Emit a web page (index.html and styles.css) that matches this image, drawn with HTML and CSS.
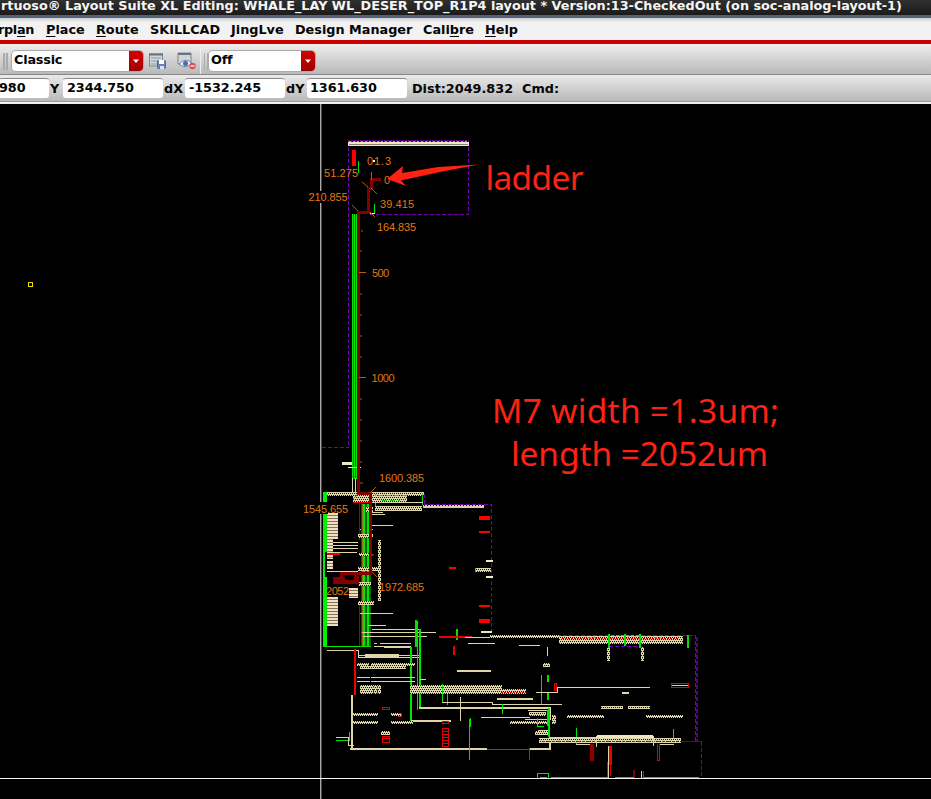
FILE: index.html
```html
<!DOCTYPE html>
<html lang="en">
<head>
<meta charset="utf-8">
<title>Layout Suite XL</title>
<link rel="stylesheet" href="styles.css">
</head>
<body>
<div class="app">
<header class="title"><span class="title-text">rtuoso® Layout Suite XL Editing: WHALE_LAY WL_DESER_TOP_R1P4 layout * Version:13-CheckedOut (on soc-analog-layout-1)</span></header>
<nav class="menu">
<span class="m1">rpl<u>a</u>n</span><span class="m2"><u>P</u>lace</span><span class="m3"><u>R</u>oute</span><span class="m4">SKILLCAD</span><span class="m5">JingLve</span><span class="m6">Design Manager</span><span class="m7">Cali<u>b</u>re</span><span class="m8"><u>H</u>elp</span>
</nav>
<div class="tools">
<i class="grip"></i>
<div class="combo wide"><span>Classic</span><b class="drop"><svg width="8" height="5" viewBox="0 0 8 5"><path d="M1 .5h6L4 4z" fill="#fff"/></svg></b></div>
<svg class="ic save" width="18" height="18" viewBox="0 0 18 18"><rect x=".5" y="2" width="13" height="12" fill="#d5d8da" stroke="#808990"/><path d="M0 2.5h14" stroke="#66717b" stroke-width="2"/><path d="M2 6h10M2 9h7M2 12h6" stroke="#8c969d"/><rect x="8.500" y="8.500" width="8" height="8" rx="1" fill="#6882b4" stroke="#536b9b"/><path d="M10 8h5v4h-5z" fill="#fff"/><path d="M11 14h4v3h-4z" fill="#d9e1ee"/></svg>
<svg class="ic eye" width="19" height="18" viewBox="0 0 19 18"><path d="M1 12V1h13v11z" fill="#d3d6d9" stroke="#7a858e"/><path d="M1 2h13" stroke="#69747e" stroke-width="2"/><path d="M2 12q6-7 13-1-6 7-13 1z" fill="#e9eff8" stroke="#6d85a6"/><circle cx="8.500" cy="11.500" r="2.500" fill="#486caa"/><circle cx="15.500" cy="14" r="3.200" fill="#db4f52"/><path d="M13.500 14h4" stroke="#fff" stroke-width="1.300"/></svg>
<i class="edge"></i><i class="grip second"></i>
<div class="combo off"><span>Off</span><b class="drop"><svg width="8" height="5" viewBox="0 0 8 5"><path d="M1 .5h6L4 4z" fill="#fff"/></svg></b></div>
</div>
<div class="coords">
<span class="field first">980</span><label class="ly">Y</label><span class="field fy">2344.750</span><label class="lx">dX</label><span class="field fx">-1532.245</span><label class="ld">dY</label><span class="field fd">1361.630</span><span class="dist">Dist:2049.832</span><span class="cmd">Cmd:</span>
</div>
<main class="canvas">
<svg width="931" height="695" viewBox="0 104 931 695">
<defs>
<pattern id="hatch" width="4" height="4" patternUnits="userSpaceOnUse"><path d="M0 0h4v4H0z" fill="#dcd5ae"/><path d="M0 1h1v1H0zM2 1h1v1H2zM1 3h1v1H1zM3 3h1v1H3z" fill="#15150f"/></pattern>
<pattern id="fine" width="3" height="3" patternUnits="userSpaceOnUse"><path d="M0 0h3v3H0z" fill="#d8d0a8"/><path d="M1 1h1v1H1z" fill="#000"/></pattern>
<pattern id="rungs" width="4" height="3" patternUnits="userSpaceOnUse"><path d="M0 0h4v2H0z" fill="#f1dfbd"/><path d="M0 2h4v1H0z" fill="#81745e"/></pattern>
</defs>
<g class="crisp">
<path class="axis" d="M320.500 104V799"/><path class="axis soft" d="M321.500 104V799"/><path class="axis bright" d="M0 778.500H931"/>
<rect class="yellow line" x="28.500" y="282.500" width="4" height="4"/>
<g class="purple dash">
<path d="M348.500 141V448M322 447.500H348M348 141.500H468.500V214.500H370M372 492.500H424.500V505M424 504.500H491.500V635.500H695.500V741M609 646.500H642M701.500 742V778"/>
</g>
<path class="purple dim" stroke-dasharray="4 2" d="M696.500 637V742"/>

<rect class="cream" x="348" y="142" width="121" height="4"/><path d="M348 140.500H469" stroke="#7600b3" stroke-dasharray="2 1"/><path d="M349 141.500H468" stroke="#a993b5" stroke-dasharray="2 2"/><path d="M349 144.500H468" stroke="#8c866f"/>
<rect class="red" x="352" y="150" width="4" height="16"/>
<path class="green line" d="M358.500 161V173M374.500 204V213"/>
<path d="M359 213.500H375" stroke="#eee5cb"/>

<rect x="352" y="214" width="6" height="265" fill="#007200"/><path class="green line" d="M352.500 214V479M354.500 214V479M356.500 214V479"/>
<path d="M352.500 478V496M355.500 478V496" stroke="#d9d5a9"/>
<g class="cream"><rect x="342" y="462" width="10" height="3"/><rect x="348" y="467" width="13" height="1"/></g>

<rect class="hatch" x="326" y="492" width="98" height="4"/>
<rect class="green" x="323" y="492" width="4" height="154"/>
<rect x="325" y="552" width="2" height="25" fill="#000"/>
<path class="green line" d="M422.500 493V505M375.500 494V506"/>
<rect class="hatch" x="353" y="496" width="54" height="7"/><path class="red line" d="M353 502.500H371M408 507.500H421"/>
<path class="cream line" d="M407 502.500H423"/>
<rect class="hatch" x="375" y="506" width="47" height="5"/><rect class="fine" x="423" y="505" width="61" height="3"/>
<path stroke="#0ed800" stroke-dasharray="5 3" d="M378 495.500H407M382 500.500H400"/>
<rect class="rungs" x="327" y="513" width="11" height="26"/><rect class="rungs" x="327" y="539" width="6" height="20"/>
<g class="cream line"><path d="M333 542.500H358M333 545.500H358M333 548.500H358M333 552.500H357M372 514.500H385M372 512.500H383M371 525.500H393M359 529.500H373"/></g>
<path class="red line" stroke-width="2" d="M327 554H340"/>
<rect class="rungs" x="327" y="561" width="6" height="8"/><rect class="rungs" x="327" y="597" width="11" height="29"/><rect class="rungs" x="349" y="588" width="9" height="10"/><path class="cream line" d="M327 571.500H358"/>

<rect x="361" y="504" width="10" height="142" fill="#006100"/><path class="green line" stroke-width="2" d="M364 504V646M368 504V646"/><path d="M359.500 502V540M359.500 605V646" stroke="#a50000"/><path d="M362.500 504V646" stroke="#827316"/>
<g class="hatch"><rect x="358" y="534" width="15" height="4"/><rect x="359" y="553" width="11" height="3"/><rect x="358" y="567" width="23" height="4"/><rect x="359" y="582" width="12" height="4"/><rect x="358" y="601" width="16" height="4"/><rect x="366" y="507" width="7" height="5"/><rect x="378" y="540" width="3" height="61"/></g>
<g class="maroon line" stroke-width="3" fill="none"><path d="M381 179.500H371V188H368.500V212H358.500V494M358 493.500H370.500V573H341V582M356 573V582"/></g>
<g class="maroon"><rect x="333" y="577" width="12" height="7"/><rect x="345" y="580" width="14" height="4"/><rect x="354" y="576" width="5" height="8"/></g>

<g class="cream line"><path d="M360 613.500H393M368 625.500H386M362 632.500H436M363 636.500H427M374 643.500H377M380 643.500H411M374 646.500H411M384 647.500H411M325 646.500H371M327 650.500H358V657H420M358 655.500H420M372 629.500H421"/><path stroke-width="3" d="M365 655H399"/><path d="M407 657.500H418"/></g>
<path class="green line" d="M323 646.500H371M417 620.500V710M411.500 647V721M420.500 629V708"/><path class="green line" stroke-width="2" d="M411 647V721M420 629V707M416 620V647"/><path class="green line" stroke-width="2" d="M457 629V640"/>
<path class="red line" stroke-width="2" d="M439 637H472M355 649V695M454 646V655"/>
<g class="red"><rect x="479" y="516" width="11" height="4"/><rect x="479" y="531" width="11" height="2"/><rect x="449" y="567" width="7" height="2"/><rect x="479" y="605" width="11" height="2"/><rect x="479" y="619" width="11" height="4"/></g>
<g class="cream"><rect x="486" y="560" width="7" height="2"/><rect class="hatch" x="476" y="568" width="15" height="4"/><rect x="486" y="576" width="7" height="2"/><rect x="481" y="631" width="11" height="2"/></g><path class="green line" d="M475.500 568V572"/>
<path class="cream line" d="M465 637.500H500M468 643.500H495"/>

<g class="hatch"><rect x="490" y="635" width="70" height="3"/><rect x="559" y="636" width="124" height="8"/><rect x="607" y="647" width="3" height="14"/><rect x="641" y="647" width="3" height="14"/><rect x="543" y="663" width="7" height="4"/><rect x="357" y="663" width="12" height="3"/><rect x="371" y="663" width="44" height="3"/><rect x="360" y="666" width="46" height="3"/><rect x="360" y="685" width="21" height="9"/><rect x="410" y="685" width="92" height="9"/><rect x="501" y="689" width="25" height="5"/></g>
<path class="red line" stroke-dasharray="2 1" d="M562 638.500H679M501 692.500H526M373.500 686V694M377.500 686V694"/>
<g class="green line" stroke-width="2"><path d="M688 635V648M609 634V648M625 634V646M640 634V648M548 675V682M548 693V700"/><path stroke-width="1" d="M541.500 675V704M442.500 684V702M447.500 694V705M576.500 728V744M673.500 729V740"/></g>
<g class="cream line"><path d="M519 645.500H540M547 647V656"/><path stroke-width="2" d="M457 671H491M497 699H533"/><path d="M357 677.500H370M371 677.500H415M357 681.500H370M371 681.500H415M420 679.500H426M442 702.500H492V704H530M497 704.500H562M481 717.500H530M556 687.500H650M536 692.500H557V687M622 693H629M622 692H629M460.500 697V721"/></g>
<path class="cream line" stroke-width="2" fill="none" d="M419 708H550V720M411 720.500H451"/>
<path class="red line" fill="none" d="M554.500 683.500H556.500V690.500H554.500ZM671.500 683.500H688.500V687.500H671.500Z"/><path class="cream line" d="M672 685.500H688"/>
<g class="hatch"><rect x="601" y="706" width="22" height="3"/><rect x="628" y="706" width="22" height="3"/><rect x="567" y="715" width="37" height="3"/><rect x="646" y="715" width="37" height="3"/><rect x="352" y="713" width="26" height="3"/><rect x="391" y="713" width="11" height="3"/><rect x="352" y="721" width="26" height="3"/><rect x="391" y="721" width="22" height="3"/><rect x="381" y="731" width="9" height="4"/><rect x="510" y="721" width="40" height="3"/><rect x="529" y="712" width="17" height="4"/><rect x="535" y="731" width="15" height="4"/><rect x="552" y="715" width="4" height="9"/><rect x="539" y="738" width="142" height="5"/></g><rect class="cream" x="597" y="735" width="56" height="3"/>
<path class="cream line" d="M528 710.500H549M525 719.500H547M538 730.500H550M549 737.500H599M576 744.500H592M660 744.500H674"/>
<path class="cream line" stroke-width="2" d="M352 695V748M350 749H487M550 742V749H530"/><path class="dark-green line" d="M487 749.500H530M529.500 748V760"/>
<path class="green line" d="M336 740.500H350M349.500 732V740M469.500 719V760M470.500 718V727M502.500 704V714"/><path class="green line" stroke-width="2" d="M549 708V737"/><path d="M537.500 718V726H544M547 710V726" class="green line" fill="none"/><path class="cream line" fill="none" d="M336 737.500H348.500V745.500H354"/>
<path class="red line" fill="none" d="M382.500 707.500H389.500V709.500H382.500ZM398 713.500H401.500V716.500H398M382.500 736.500H389.500V742.500H382.500ZM383 738.500H389"/>
<path class="red line" fill="none" d="M442.500 721.500H448.500V723.500H442.500ZM442.500 728.500H448.500V746.500H442.500ZM443 731.500H448M443 734.500H448M443 737.500H448M443 740.500H448M443 743.500H448"/>
<path class="maroon line" d="M680 741.500H702"/><path class="red line" stroke-dasharray="3 2" d="M542 741.500H678"/>
<rect x="590" y="744" width="4" height="17" fill="#920000"/><path class="red line" fill="none" d="M657.500 744V760.500H659.500V744"/>
<path class="red line" stroke-width="3" d="M610.500 746V765"/><path class="red line" d="M607.500 762V777M610.500 746V776M643.500 771V778"/><path class="cream line" d="M608.500 746V778M641.500 771V778M596.500 736V747M653.500 736V746"/><path d="M633.500 770V778" stroke="#850000" stroke-width="2"/>
<path class="green line" fill="none" d="M537.500 778V773.500H548.500V778M540 777.500H547M551 777.500H608M615 777.500H634M643 777.500H699"/>
<path stroke="#12d500" stroke-dasharray="3 2" d="M588 637.500H596M654 637.500H661M611 635.500H641"/>
</g>
<g class="ticks"><path d="M371.500 172V180M362 182L368 187M371 188L377 194M352 205L358 211M370 212L375 217M361 231h2M360 251h2M359 272.500h7M360 294h2M360 315h2M360 336h2M360 357h2M359 377.500h7M360 399h2M360 420h2M360 441h2M360 462h2M360 483h3M370 493L376 487M353 499L358 494M372 572L377 577M371 555h3"/></g>
<rect x="319" y="191" width="5" height="12"/><rect x="319" y="502" width="9" height="12"/>
<g class="measure">
<text x="367" y="165" textLength="24">01.3</text><text x="324" y="177" textLength="34">51.275</text><text x="384" y="184" textLength="6">0</text><text x="308.500" y="201" textLength="39">210.855</text><text x="380" y="207.500" textLength="34">39.415</text><text x="377" y="231" textLength="39">164.835</text><text x="372" y="276.500" textLength="17">500</text><text x="371.500" y="381.500" textLength="23">1000</text><text x="379" y="482" textLength="45">1600.385</text><text x="303" y="512.500" textLength="45">1545.655</text><text x="326" y="595" textLength="23">2052</text><text x="379" y="591" textLength="45">1972.685</text>
</g>
<rect x="373" y="160" width="2" height="2" fill="#fff"/>
<path d="M479 164.500L438 167L402 173L403 166L387 179L406 186L401 180.500L440 172Z" fill="#ff2114"/>
<g class="note"><text x="485.500" y="190" textLength="98">ladder</text><text x="492" y="423" textLength="287">M7 width =1.3um;</text><text x="511" y="466" textLength="257">length =2052um</text></g>
</svg>
</main>
</div>
</body>
</html>
```
FILE: styles.css
```css
* { box-sizing: border-box; }
body { margin: 0; background: #000; overflow: hidden; }
.app { width: 931px; height: 799px; display: flex; flex-direction: column; overflow: hidden; font: bold 12.800px/16px "DejaVu Sans", sans-serif; color: #050505; white-space: nowrap; }
.title { height: 18px; flex: none; background: linear-gradient(#303030, #1b1b1b 15px, #53617b 15px); color: #f5f5f5; line-height: 12px; padding-left: 1px; }
.menu { height: 26px; flex: none; display: flex; padding-top: 4px; background: linear-gradient(#ccc, #f2f2f2 4px); border-bottom: 4px solid #c80000; }
.menu span { flex: none; }
.menu u { text-underline-offset: 2px; text-decoration-thickness: 1px; }
.m1 { width: 48px; margin-left: -2px; letter-spacing: -0.300px; } .m2 { width: 50px; } .m3 { width: 54px; } .m4 { width: 81px; } .m5 { width: 64px; } .m6 { width: 128px; } .m7 { width: 62px; }
.tools { height: 31px; flex: none; display: flex; padding-top: 7px; background: linear-gradient(#f4eeee, #e5e5e5 5px, #b9b9b9); border-bottom: 1px solid #888; }
.grip { width: 5px; height: 17px; margin: 2px 4px 0 3px; border-left: 2px solid #aaa; border-right: 2px solid #aaa; }
.combo { display: flex; height: 20px; flex: none; border-radius: 4px; overflow: hidden; background: #fff; box-shadow: 0 0 0 1px #aaa; padding: 1px 0 0 2px; letter-spacing: -0.200px; }
.combo span { flex: 1; }
.wide { width: 131px; }
.off { width: 106px; }
.drop { width: 14px; margin-top: -1px; height: 20px; background: linear-gradient(#d80000, #9e0000); display: grid; place-items: center; }
.ic { flex: none; margin-top: 1px; }
.save { margin-left: 6px; } .eye { margin-left: 10px; }
.edge { width: 1px; margin: -5px 0 0 4px; background: #eee; }
.grip.second { margin-left: 3px; margin-right: 1px; width: 4px; border-width: 0 1px; }
.coords { height: 29px; flex: none; display: flex; padding-top: 3px; background: linear-gradient(#eaeaea, #b9b9b9 26px, #999 26px, #999 27px, #f2f2f2 27px); border-bottom: 1px solid #eee; }
.field { flex: none; background: #fff; height: 20px; border-radius: 3px; border-top: 1px solid #888; padding: 1px 0 0 4px; letter-spacing: -0.050px; }
.coords label, .dist, .cmd { padding-top: 3px; flex: none; }
.first { width: 50px; padding-left: 0; margin-left: -1px; } .fy, .fx, .fd { width: 100px; }
.ly { width: 14px; padding-left: 1px; } .lx { width: 22px; padding-left: 1px; } .ld { width: 21px; padding-left: 1px; }
.fd { margin-left: 1px; padding-left: 3px; } .dist { width: 115px; padding-left: 5px; }
.canvas { flex: 1; background: #000; }
.canvas > svg { display: block; }
.crisp { shape-rendering: crispEdges; }
.axis { stroke: #a8a8a8; stroke-width: 1; } .axis.soft { stroke: #484848; } .axis.bright { stroke: #f5f5f5; }
.line { fill: none; }
.green { fill: #00f000; } .green.line { fill: none; stroke: #00e400; }
.dark-green { stroke: #008900; }
.red { fill: #f00; } .red.line { fill: none; stroke: #e90000; }
.maroon { fill: #820000; } .maroon.line { fill: none; stroke: #820000; }
.cream { fill: #eee8bd; } .cream.line { fill: none; stroke: #ded6ab; }
.yellow.line { stroke: #e7e500; }
.purple { fill: none; stroke: #7600b3; } .dim { stroke: #550080; stroke-width: 2; }
.dash { stroke-dasharray: 4 2; }
.hatch, .hatch rect { fill: url(#hatch); } .fine { fill: url(#fine); } .rungs { fill: url(#rungs); }
.ticks { fill: none; stroke: #ba5b00; stroke-width: 1; }
.measure { font: normal 11px "Liberation Sans", sans-serif; fill: #e07810; }
.measure text { white-space: pre; }
.note { font: normal 33.500px "Noto Sans", sans-serif; fill: #ff2114; }
```
